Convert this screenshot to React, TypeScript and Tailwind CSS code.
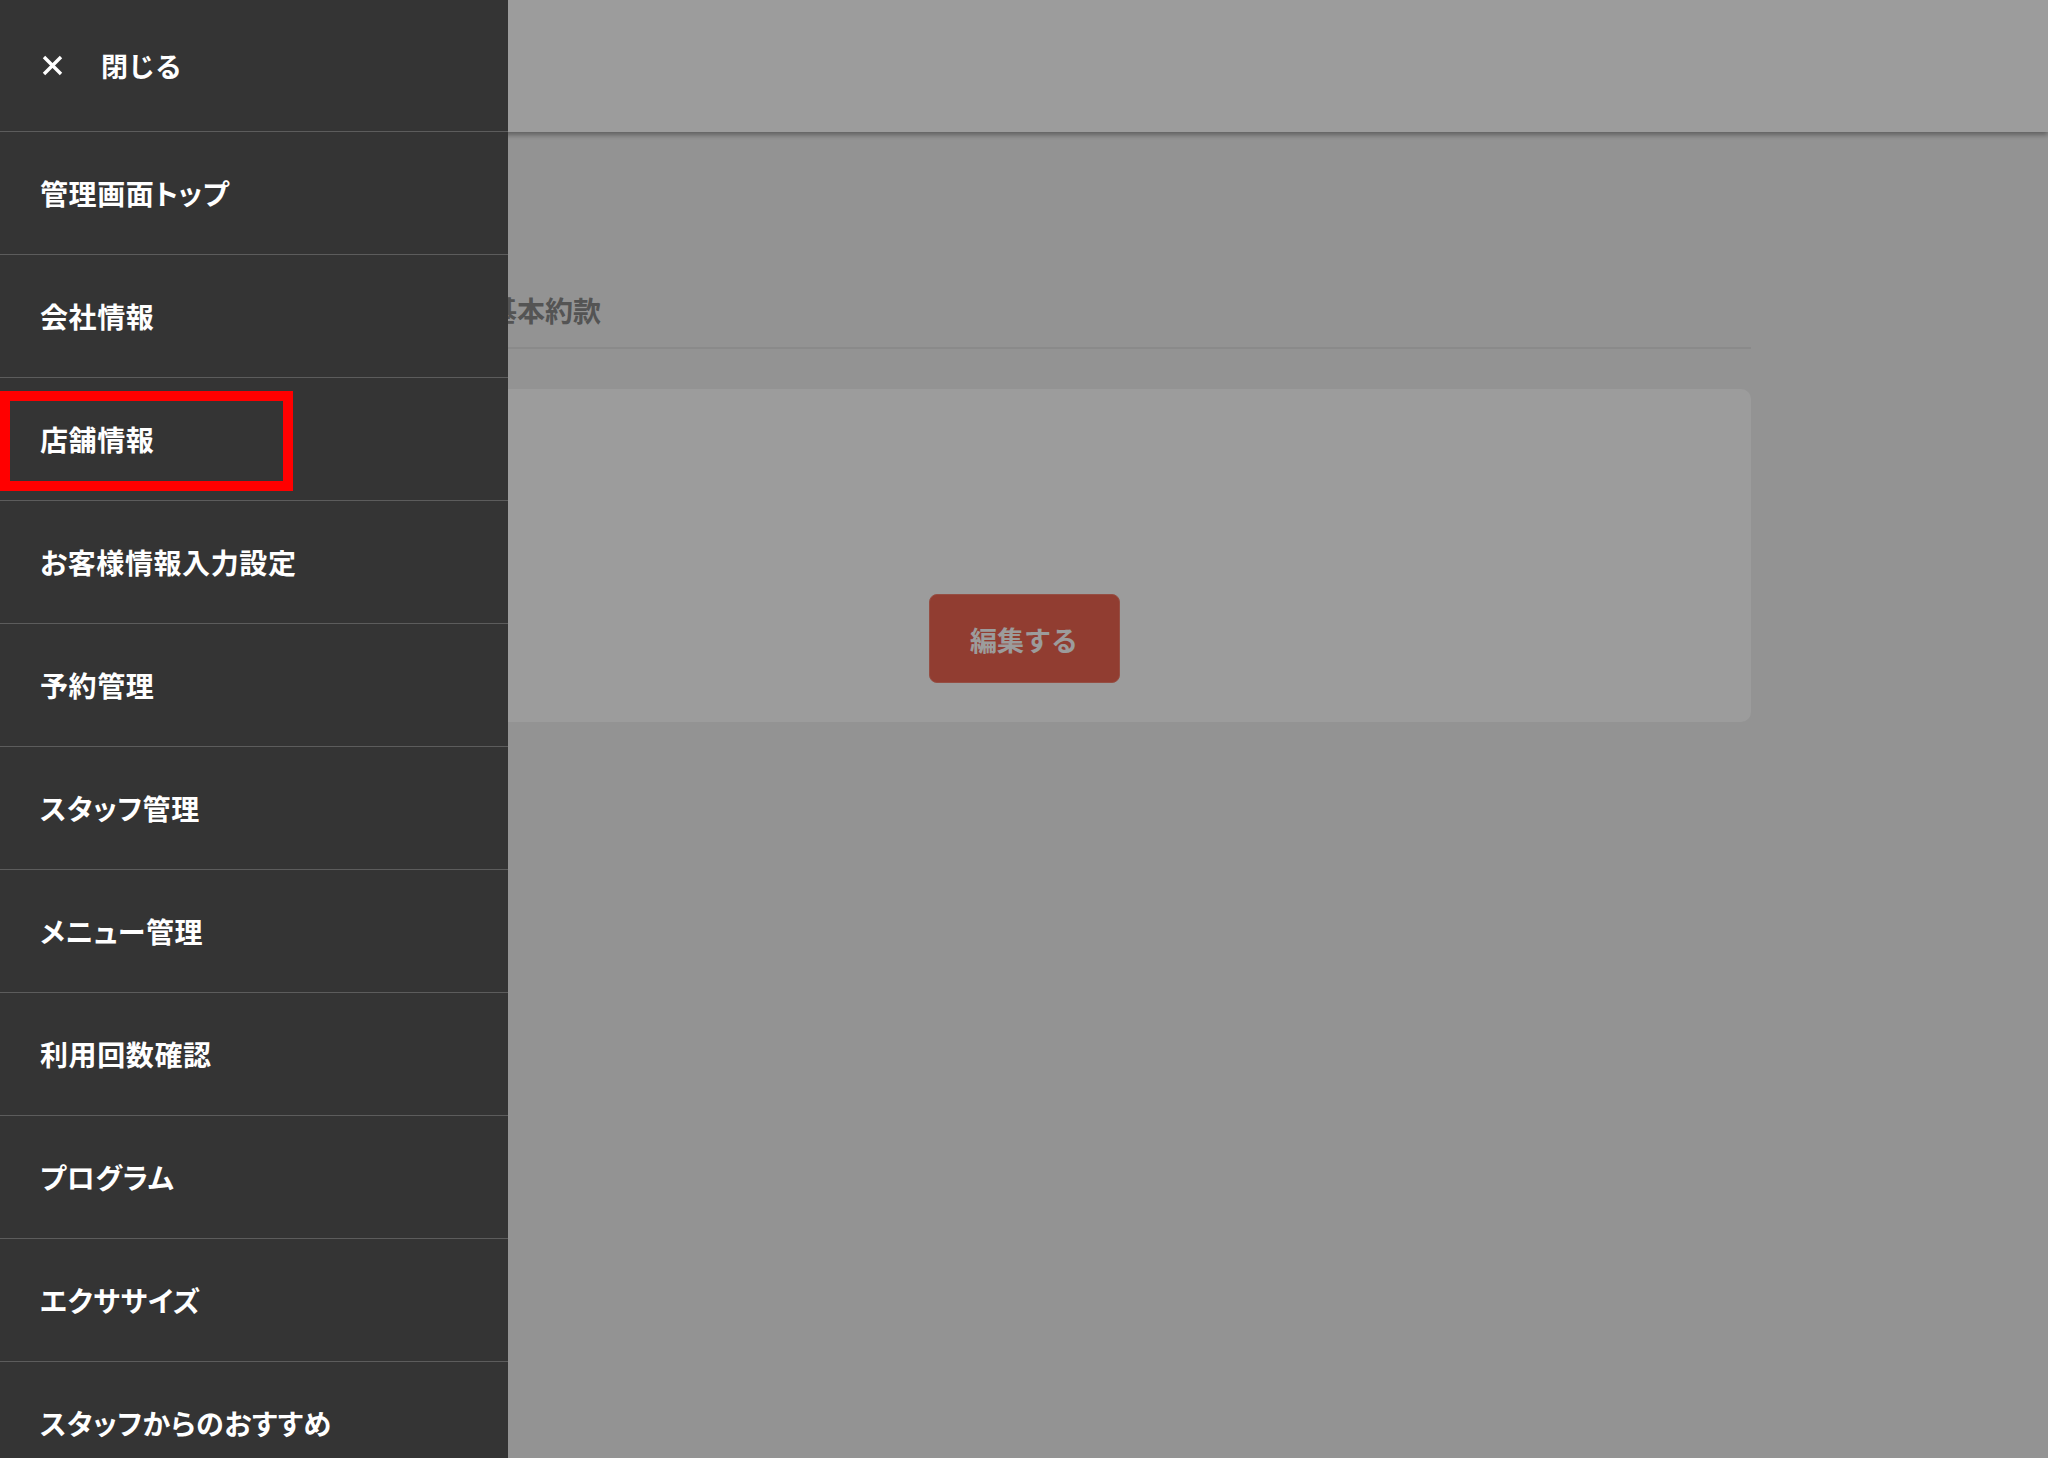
const menuItems = [
  '管理画面トップ',
  '会社情報',
  '店舗情報',
  'お客様情報入力設定',
  '予約管理',
  'スタッフ管理',
  'メニュー管理',
  '利用回数確認',
  'プログラム',
  'エクササイズ',
  'スタッフからのおすすめ',
];

const font = "font-['Noto_Sans_CJK_JP','Noto_Sans',sans-serif]";

function PageBehind() {
  return (
    <div className="h-full w-full bg-[#f1f1f1]">
      <header className="h-[132px] bg-white shadow-[0_3px_5px_rgba(0,0,0,0.35)]" />
      <main className="mx-auto w-[1454px] pt-[158px]">
        <div className="flex gap-[48px] border-b-2 border-[#e2e2e2] pb-[17px] pl-[32px] text-[28px] font-bold leading-[40px] text-[#8a8a8a]">
          <span>店舗情報</span>
          <span>基本約款</span>
        </div>
        <div className="mt-[40px] flex h-[333px] justify-center rounded-[10px] bg-white pt-[205px]">
          <button className="h-[89px] w-[191px] rounded-[8px] border border-[#f3806e] bg-[#ee6450] pt-[3px] text-[27px] font-bold text-white">
            編集する
          </button>
        </div>
      </main>
    </div>
  );
}

function Drawer() {
  return (
    <nav className="flex h-full w-[508px] flex-col overflow-hidden bg-[#343434] text-white">
      <div className="flex h-[132px] shrink-0 items-center border-b border-[#5c5c5c] pl-[41px]">
        <svg width="23" height="23" viewBox="0 0 23 23" className="mr-[37px]">
          <path d="M3 3 L20 20 M20 3 L3 20" stroke="white" strokeWidth="3.4" />
        </svg>
        <span className="text-[27px] font-bold leading-none">閉じる</span>
      </div>
      {menuItems.map((label) => (
        <div
          key={label}
          className="relative flex h-[123px] shrink-0 items-center border-b border-[#5c5c5c] pl-[40px]"
        >
          <span className="text-[28px] font-bold leading-none tracking-[0.6px] [font-feature-settings:'palt']">
            {label}
          </span>
          {label === '店舗情報' && (
            <div className="absolute left-0 top-[13px] h-[100px] w-[293px] border-[10px] border-[#ff0000]" />
          )}
        </div>
      ))}
    </nav>
  );
}

export default function App() {
  return (
    <div className={`relative h-[1458px] w-[2048px] overflow-hidden ${font}`}>
      <PageBehind />
      <div className="absolute inset-0 bg-[rgba(0,0,0,0.39)]" />
      <div className="absolute left-0 top-0 h-full">
        <Drawer />
      </div>
    </div>
  );
}
